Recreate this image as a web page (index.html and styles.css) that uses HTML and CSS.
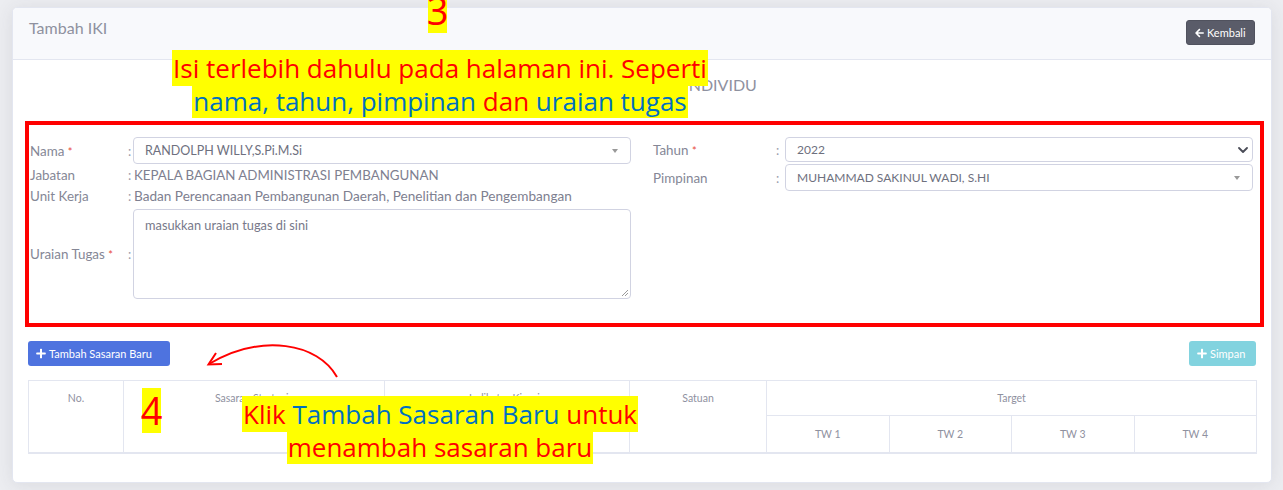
FILE: index.html
```html
<!DOCTYPE html>
<html lang="id">
<head>
<meta charset="utf-8">
<title>Tambah IKI</title>
<link rel="stylesheet" href="styles.css">
</head>
<body>
<div class="page">
  <div class="card">
    <div class="card-header">
      <h6 class="card-title">Tambah IKI</h6>
      <a class="btn btn-secondary btn-back">
        <svg class="ico" viewBox="0 0 448 512" width="9" height="10"><path fill="currentColor" d="M257.5 445.1l-22.2 22.2c-9.4 9.4-24.6 9.4-33.9 0L7 273c-9.4-9.4-9.4-24.6 0-33.9L201.4 44.7c9.4-9.4 24.6-9.4 33.9 0l22.2 22.2c9.5 9.5 9.3 25-.4 34.3L136.6 216H424c13.3 0 24 10.7 24 24v32c0 13.3-10.7 24-24 24H136.6l120.5 114.8c9.8 9.3 10 24.8.4 34.3z"/></svg>Kembali
      </a>
    </div>
    <div class="card-body">
      <h5 class="form-title">INDIKATOR KINERJA INDIVIDU</h5>
      <div class="form-grid">
        <div class="form-col form-left">
          <label class="lbl row-nama">Nama <span class="req">*</span></label>
          <span class="colon">:</span>
          <div class="select2 row-nama"><span class="sel-text">RANDOLPH WILLY,S.Pi.M.Si</span><span class="caret"></span></div>

          <label class="lbl">Jabatan</label>
          <span class="colon">:</span>
          <div class="val val-caps">KEPALA BAGIAN ADMINISTRASI PEMBANGUNAN</div>

          <label class="lbl">Unit Kerja</label>
          <span class="colon">:</span>
          <div class="val">Badan Perencanaan Pembangunan Daerah, Penelitian dan Pengembangan</div>

          <label class="lbl lbl-uraian">Uraian Tugas <span class="req">*</span></label>
          <span class="colon lbl-uraian">:</span>
          <div class="textarea"><span class="placeholder">masukkan uraian tugas di sini</span>
            <svg class="grip" viewBox="0 0 8 8" width="8" height="8"><path d="M7 1L1 7M7 4L4 7" stroke="#9a9a9a" stroke-width="1" fill="none"/></svg>
          </div>
        </div>
        <div class="form-col form-right">
          <label class="lbl">Tahun <span class="req">*</span></label>
          <span class="colon">:</span>
          <div class="custom-select"><span>2022</span>
            <svg class="chev" viewBox="0 0 10 6" width="10" height="6"><path d="M1 1l4 4 4-4" stroke="#4a4c57" stroke-width="1.8" fill="none" stroke-linecap="round" stroke-linejoin="round"/></svg>
          </div>

          <label class="lbl">Pimpinan</label>
          <span class="colon">:</span>
          <div class="select2 select2-sm"><span>MUHAMMAD SAKINUL WADI, S.HI</span><span class="caret"></span></div>
        </div>
      </div>

      <div class="actions">
        <button class="btn btn-primary">
          <svg class="ico" viewBox="0 0 448 512" width="10" height="11"><path fill="currentColor" d="M416 208H272V64c0-17.67-14.33-32-32-32h-32c-17.67 0-32 14.33-32 32v144H32c-17.67 0-32 14.33-32 32v32c0 17.67 14.33 32 32 32h144v144c0 17.67 14.33 32 32 32h32c17.67 0 32-14.33 32-32V304h144c17.67 0 32-14.33 32-32v-32c0-17.67-14.33-32-32-32z"/></svg>Tambah Sasaran Baru
        </button>
        <button class="btn btn-info btn-disabled">
          <svg class="ico" viewBox="0 0 448 512" width="10" height="11"><path fill="currentColor" d="M416 208H272V64c0-17.67-14.33-32-32-32h-32c-17.67 0-32 14.33-32 32v144H32c-17.67 0-32 14.33-32 32v32c0 17.67 14.33 32 32 32h144v144c0 17.67 14.33 32 32 32h32c17.67 0 32-14.33 32-32V304h144c17.67 0 32-14.33 32-32v-32c0-17.67-14.33-32-32-32z"/></svg>Simpan
        </button>
      </div>

      <table class="tbl">
        <colgroup>
          <col class="c-no"><col class="c-sasaran"><col class="c-indikator"><col class="c-satuan">
          <col class="c-tw"><col class="c-tw"><col class="c-tw"><col class="c-tw">
        </colgroup>
        <thead>
          <tr class="r1">
            <th rowspan="2" class="top">No.</th>
            <th rowspan="2" class="top">Sasaran Strategis</th>
            <th rowspan="2" class="top">Indikator Kinerja</th>
            <th rowspan="2" class="top">Satuan</th>
            <th colspan="4">Target</th>
          </tr>
          <tr class="r2">
            <th>TW 1</th><th>TW 2</th><th>TW 3</th><th>TW 4</th>
          </tr>
        </thead>
      </table>
    </div>
  </div>

  <!-- tutorial annotations (overlay) -->
  <div class="frame"></div>
  <div class="num num-3">3</div>
  <div class="num num-4">4</div>
  <div class="callout callout-1">
    <div class="cl cl-a"><span class="red">Isi terlebih dahulu pada halaman ini. Seperti</span></div>
    <div class="cl cl-b"><span class="blue">nama, tahun, pimpinan</span> <span class="red">dan</span> <span class="blue">uraian tugas</span></div>
  </div>
  <div class="callout callout-2">
    <div class="cl cl-a"><span class="red">Klik</span> <span class="blue">Tambah Sasaran Baru</span> <span class="red">untuk</span></div>
    <div class="cl cl-b"><span class="red">menambah sasaran baru</span></div>
  </div>
  <svg class="arrow" width="1283" height="490" viewBox="0 0 1283 490">
    <path d="M337 377 C 318 343, 262 333, 209 364" stroke="#ff0000" stroke-width="2" fill="none"/>
    <path d="M216 353 L208.5 364.5 L222 364" stroke="#ff0000" stroke-width="2" fill="none" stroke-linejoin="miter"/>
  </svg>
</div>
</body>
</html>
```

FILE: styles.css
```css
* { box-sizing: border-box; }

html, body {
  margin: 0;
  padding: 0;
}

body {
  background: #ecedf1;
  font-family: "Lato", "Open Sans", sans-serif;
  color: #858796;
  width: 1283px;
  height: 490px;
  overflow: hidden;
}

.page {
  position: relative;
  width: 1283px;
  height: 490px;
  padding: 7px 11px 0 12px;
}

/* ---------- card ---------- */
.card {
  width: 1260px;
  height: 476px;
  background: #fff;
  border: 1px solid #e3e6f0;
  border-radius: 5px;
  box-shadow: 0 2px 18px rgba(58, 59, 69, 0.10);
  overflow: hidden;
}

.card-header {
  height: 52px;
  background: #f8f9fc;
  border-bottom: 1px solid #e3e6f0;
  display: flex;
  align-items: flex-start;
  justify-content: space-between;
  padding: 10px 16px 0 16px;
}

.card-title {
  margin: 0;
  font-size: 16px;
  line-height: 20px;
  font-weight: 400;
  color: #8f919f;
}

.btn {
  display: inline-flex;
  align-items: center;
  gap: 3px;
  height: 25px;
  border: 0;
  border-radius: 3px;
  color: #fff;
  font-family: "Lato", "Open Sans", sans-serif;
  font-size: 11px;
  padding: 0 8px;
  cursor: pointer;
}

.btn .ico { display: block; }

.btn-back {
  margin-top: 2px;
  width: 69px;
  background: #5a5c69;
  border: 1px solid #50525e;
  padding: 0 6px 0 8px;
}

.btn-primary {
  background: #4e73df;
  width: 142px;
  padding-left: 8px;
}

.btn-info { background: #36b9cc; }
.btn-disabled { opacity: 0.62; width: 67px; padding-left: 8px; }

/* ---------- body ---------- */
.card-body {
  padding: 15px 15px 0 15px;
}

.form-title {
  margin: 0;
  text-align: center;
  font-size: 16px;
  line-height: 20px;
  font-weight: 400;
  color: #8f919f;
}

.form-grid {
  margin-top: 42px;
  padding-left: 2px;
  display: flex;
  gap: 22px;
}

.form-col {
  display: grid;
  align-items: center;
}

.form-left {
  grid-template-columns: 98px 5px 498px;
  grid-template-rows: 27px 22px 20px 93px;
}

.form-right {
  grid-template-columns: 123px 9px 468px;
  grid-template-rows: 25px 27px;
  row-gap: 2px;
  align-content: start;
}

.lbl {
  font-size: 13.4px;
  color: #858796;
  white-space: nowrap;
}

.req { color: #e74a3b; font-size: 11px; }

.colon {
  font-size: 13px;
  color: #9a9cab;
}

.lbl-uraian { padding-top: 3px; }

.val {
  font-size: 13.6px;
  color: #7e8090;
  white-space: nowrap;
  padding-left: 1px;
}

.val-caps { font-size: 13.3px; }

.select2,
.custom-select {
  height: 27px;
  border: 1px solid #d1d3e2;
  border-radius: 4px;
  display: flex;
  align-items: center;
  justify-content: space-between;
  padding: 0 12px 0 11px;
  font-size: 12px;
  color: #6e707e;
  background: #fff;
}

.sel-text { font-size: 12.5px; }

.custom-select { height: 25px; padding-right: 4px; }

.caret {
  width: 0;
  height: 0;
  border-style: solid;
  border-width: 4px 3.5px 0 3.5px;
  border-color: #999 transparent transparent transparent;
}

.textarea {
  position: relative;
  align-self: end;
  height: 90px;
  border: 1px solid #d1d3e2;
  border-radius: 4px;
  padding: 7px 11px;
  font-size: 12.8px;
  color: #6e707e;
}

.placeholder { color: #77798a; }

.grip {
  position: absolute;
  right: 1px;
  bottom: 1px;
}

/* ---------- actions ---------- */
.actions {
  margin-top: 42px;
  display: flex;
  justify-content: space-between;
}

/* ---------- table ---------- */
.tbl {
  margin-top: 14px;
  width: 1228px;
  table-layout: fixed;
  border-collapse: collapse;
  font-size: 10.5px;
}

.c-no { width: 95px; }
.c-sasaran { width: 261px; }
.c-indikator { width: 245px; }
.c-satuan { width: 137px; }
.c-tw { width: 122.5px; }

.tbl th {
  border: 1px solid #e3e6f0;
  font-weight: 400;
  color: #8f919f;
  text-align: center;
  line-height: 14px;
  padding: 0;
}

.tbl th.top { vertical-align: top; padding-top: 10px; }
.tbl .r1 th { height: 35px; }
.tbl .r2 th { height: 37px; border-bottom: 2px solid #e3e6f0; }
.tbl thead tr:first-child th.top { border-bottom: 2px solid #e3e6f0; }

/* ---------- annotations ---------- */
.frame {
  position: absolute;
  left: 25px;
  top: 121px;
  width: 1239px;
  height: 206px;
  border: 4px solid #ff0000;
  pointer-events: none;
}

.num {
  position: absolute;
  background: #ffff00;
  color: #ff0000;
  font-family: "Open Sans", sans-serif;
  font-size: 38px;
  line-height: 45px;
  text-align: center;
  width: 19px;
  height: 45px;
  display: flex;
  justify-content: center;
  overflow: visible;
}

.num-3 { left: 428px; top: -12px; }
.num-4 { left: 142px; top: 388px; }

.callout {
  position: absolute;
  left: 0;
  width: 880px;
  display: flex;
  flex-direction: column;
  align-items: center;
  font-family: "Open Sans", sans-serif;
  font-size: 26px;
  white-space: nowrap;
}

.cl {
  background: #ffff00;
  padding: 0 1px;
}

.callout-1 { top: 50px; }
.callout-2 { top: 396px; }

.callout .cl-a { height: 36px; line-height: 36px; }
.callout .cl-b { height: 32px; line-height: 30px; }

.red { color: #ff0000; }
.blue { color: #0070c0; }

.arrow {
  position: absolute;
  left: 0;
  top: 0;
  pointer-events: none;
}
```
